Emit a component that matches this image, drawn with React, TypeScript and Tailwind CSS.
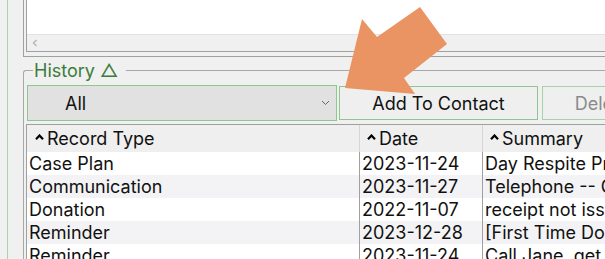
import React from "react";

const rows = [
  ["Case Plan", "2023-11-24", "Day Respite Program"],
  ["Communication", "2023-11-27", "Telephone -- Call back"],
  ["Donation", "2022-11-07", "receipt not issued"],
  ["Reminder", "2023-12-28", "[First Time Donor]"],
  ["Reminder", "2023-11-24", "Call Jane, get update"],
];

function Caret() {
  return (
    <svg width="9" height="6" viewBox="0 0 9 6" className="shrink-0 mb-[3px]">
      <path d="M1 5.2 L4.5 1.5 L8 5.2" fill="none" stroke="#000" strokeWidth="2.2" />
    </svg>
  );
}

export default function App() {
  return (
    <div className="w-[605px] h-[259px] overflow-hidden bg-[#f0f0f0] relative flex font-['Inter',sans-serif] text-[18px] text-[#111]">
      <div className="w-[7px] shrink-0" />
      <div className="w-px shrink-0 bg-[#a8d4a8]" />
      <div className="w-[15px] shrink-0" />
      <div className="flex-1 min-w-0 flex flex-col">
        {/* upper panel */}
        <div className="h-[57px] shrink-0 border-l border-b border-[#a0a0a0] pl-[2px] pb-[4px] flex">
          <div className="flex-1 border-l border-b border-[#a0a0a0] flex flex-col">
            <div className="h-[34px] bg-white" />
            <div className="h-px bg-[#e2e2e2]" />
            <div className="flex-1 flex items-center pl-[5px]">
              <svg width="6" height="8" viewBox="0 0 6 8">
                <path d="M4.5 1 L1.5 4 L4.5 7" fill="none" stroke="#b8b8b8" strokeWidth="1.5" />
              </svg>
            </div>
          </div>
        </div>

        {/* group box */}
        <div className="mt-[4px] flex flex-col">
          <div className="h-[20px] flex items-start">
            <div className="mt-[9px] w-[10px] h-[11px] border-t border-l border-[#a8a8a8] rounded-tl-[3px]" />
            <span className="leading-[20px] text-[18px] text-[#3a7d3a] px-[1px] whitespace-nowrap">
              History △
            </span>
            <div className="mt-[9px] ml-[7px] flex-1 border-t border-[#a8a8a8]" />
          </div>
          <div className="border-l border-[#a8a8a8] pl-[2px] pt-[4px] flex flex-col">
            <div className="h-[36px] flex items-center whitespace-nowrap">
              <div className="ml-[1px] w-[310px] h-[36px] shrink-0 bg-[#e1e1e1] border border-[#8fc68f] flex items-center">
                <span className="ml-[37px]">All</span>
                <div className="flex-1" />
                <svg width="9" height="6" viewBox="0 0 9 6" className="mr-[6px]">
                  <path d="M1 1 L4.5 4.5 L8 1" fill="none" stroke="#666" strokeWidth="1" />
                </svg>
              </div>
              <div className="ml-[2px] w-[199px] h-[34px] shrink-0 bg-[#efefef] border border-[#8fc68f] flex items-center justify-center">
                Add To Contact
              </div>
              <div className="ml-[4px] w-[120px] h-[34px] shrink-0 bg-[#efefef] border border-[#a6d2a6] flex items-center justify-center text-[#8a8a8a]">
                Delete
              </div>
            </div>
            <div className="mt-[3px] border-t border-l border-[#a0a0a0] flex flex-col whitespace-nowrap">
              <div className="h-[27px] flex bg-[#efefef] leading-[27px]">
                <div className="w-[333px] shrink-0 border-r border-[#d6d6d6] flex items-center pl-[8px] gap-[3px]">
                  <Caret />
                  <span>Record Type</span>
                </div>
                <div className="w-[123px] shrink-0 border-r border-[#d6d6d6] flex items-center pl-[7px] gap-[3px]">
                  <Caret />
                  <span>Date</span>
                </div>
                <div className="flex-1 flex items-center pl-[7px] gap-[3px] overflow-hidden">
                  <Caret />
                  <span>Summary</span>
                </div>
              </div>
              {rows.map((r, i) => (
                <div
                  key={i}
                  className={
                    "h-[23px] flex leading-[23px] " + (i % 2 === 1 ? "bg-[#f3f3f5]" : "bg-white")
                  }
                >
                  <div className="w-[333px] shrink-0 border-r border-[#a0a0a0] pl-[2px] overflow-hidden">
                    {r[0]}
                  </div>
                  <div className="w-[123px] shrink-0 border-r border-[#a0a0a0] pl-[2px] overflow-hidden">
                    {r[1]}
                  </div>
                  <div className="flex-1 pl-[2px] overflow-hidden">{r[2]}</div>
                </div>
              ))}
            </div>
          </div>
        </div>
      </div>

      <svg
        className="absolute left-0 top-0 pointer-events-none"
        width="605"
        height="259"
        viewBox="0 0 605 259"
      >
        <polygon
          points="345,88 362,19 377,37 420,7 447,44 404,78 415,94"
          fill="#eb9463"
        />
      </svg>
    </div>
  );
}
